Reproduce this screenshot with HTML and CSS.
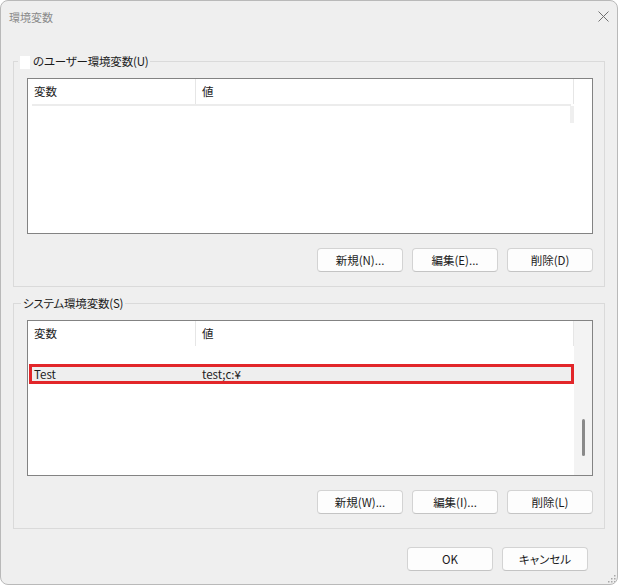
FILE: index.html
```html
<!DOCTYPE html>
<html lang="ja">
<head>
    <meta charset="UTF-8">
    <title>環境変数</title>
    <link rel="stylesheet" href="styles.css">
</head>
<body>
    <div class="window">
        <!-- タイトルバー -->
        <div class="titlebar">
            <span class="title">環境変数</span>
            <svg class="close" width="11" height="11" viewBox="0 0 11 11">
                <path d="M0.5 0.5 L10.5 10.5 M10.5 0.5 L0.5 10.5" stroke="#707070" stroke-width="1" fill="none"/>
            </svg>
        </div>

        <div class="content">
            <!-- ユーザー環境変数 -->
            <div class="group">
                <div class="group-title group-title-user">
                    <span class="check"></span>
                    <span>のユーザー環境変数(U)</span>
                </div>
                <div class="listview">
                    <div class="lv-header">
                        <div class="col col-name">変数</div>
                        <div class="col col-value">値</div>
                    </div>
                    <div class="lv-rule"></div>
                    <div class="lv-stub"></div>
                </div>
                <div class="buttons">
                    <button class="btn">新規(N)...</button>
                    <button class="btn">編集(E)...</button>
                    <button class="btn">削除(D)</button>
                </div>
            </div>

            <!-- システム環境変数 -->
            <div class="group group-system">
                <div class="group-title">
                    <span>システム環境変数(S)</span>
                </div>
                <div class="listview listview-scroll">
                    <div class="lv-main">
                        <div class="lv-header">
                            <div class="col col-name">変数</div>
                            <div class="col col-value">値</div>
                        </div>
                        <div class="lv-row selected">
                            <div class="row-name">Test</div>
                            <div class="row-value">test;c:¥</div>
                        </div>
                    </div>
                    <div class="scrollbar">
                        <div class="thumb"></div>
                    </div>
                </div>
                <div class="buttons">
                    <button class="btn">新規(W)...</button>
                    <button class="btn">編集(I)...</button>
                    <button class="btn">削除(L)</button>
                </div>
            </div>
        </div>

        <div class="footer">
            <button class="btn">OK</button>
            <button class="btn">キャンセル</button>
        </div>

        <svg class="grip" width="9" height="9" viewBox="0 0 9 9">
            <rect x="7" y="1" width="1.5" height="1.5" fill="#a8a8a8"/>
            <rect x="4" y="4" width="1.5" height="1.5" fill="#a8a8a8"/>
            <rect x="7" y="4" width="1.5" height="1.5" fill="#a8a8a8"/>
            <rect x="1" y="7" width="1.5" height="1.5" fill="#a8a8a8"/>
            <rect x="4" y="7" width="1.5" height="1.5" fill="#a8a8a8"/>
            <rect x="7" y="7" width="1.5" height="1.5" fill="#a8a8a8"/>
        </svg>
    </div>
</body>
</html>
```

FILE: styles.css
```css
/* 全体 */
body {
    margin: 0;
    font-family: "Noto Sans CJK JP", "Noto Sans", sans-serif;
    font-size: 11.5px;
    font-feature-settings: "palt";
    color: #1b1b1b;
    background: #ffffff;
}

.window {
    position: relative;
    width: 618px;
    height: 585px;
    box-sizing: border-box;
    border: 1px solid #b9b9b9;
    border-radius: 8px;
    background-color: #efefef;
    overflow: hidden;
}

/* タイトルバー */
.titlebar {
    height: 31px;
    display: flex;
    align-items: center;
    justify-content: space-between;
    padding: 0 8px;
}

.title {
    font-size: 11px;
    color: #8a8a8a;
}

.close {
    display: block;
}

.content {
    padding: 29px 12px 0;
}

/* グループボックス */
.group {
    border: 1px solid #dadada;
    padding: 0 11px 14px 13px;
}

.group-system {
    margin-top: 16px;
}

.group-title {
    display: flex;
    align-items: center;
    gap: 3px;
    width: fit-content;
    height: 16px;
    margin: -9px 0 0 -6px;
    padding: 0 2px;
    background-color: #efefef;
    line-height: 16px;
    letter-spacing: -0.2px;
}

.group-title-user {
    margin-left: -9px;
}

.check {
    width: 10px;
    height: 13px;
    margin-top: 3px;
    background-color: #ffffff;
}

/* リストビュー */
.listview {
    margin-top: 9px;
    height: 156px;
    box-sizing: border-box;
    border: 1px solid #838383;
    background-color: #ffffff;
}

.listview-scroll {
    display: flex;
}

.lv-main {
    width: 546px;
}

.lv-header {
    display: flex;
    height: 25px;
}

.col {
    box-sizing: border-box;
    padding-left: 6px;
    line-height: 25px;
    border-right: 1px solid #e6e6e6;
}

.col-name {
    width: 168px;
}

.col-value {
    width: 378px;
}

.lv-rule {
    height: 2px;
    margin: 0 21px 0 4px;
    background-color: #ececec;
}

.lv-stub {
    width: 4px;
    height: 17px;
    margin-left: 542px;
    background-color: #efefef;
}

.lv-row {
    display: flex;
    height: 20px;
    box-sizing: border-box;
    margin: 18px 0 0 1px;
    line-height: 14px;
}

.lv-row.selected {
    border: 3px solid #e2262a;
    background-color: #eeeeee;
}

.row-name {
    width: 170px;
    padding-left: 2px;
    box-sizing: border-box;
}

.scrollbar {
    width: 18px;
    background-color: #f3f3f3;
}

.thumb {
    width: 3px;
    height: 37px;
    margin: 98px 0 0 8px;
    border-radius: 2px;
    background-color: #8a8a8a;
}

/* ボタン */
.buttons {
    display: flex;
    justify-content: flex-end;
    gap: 9px;
    margin-top: 14px;
}

.btn {
    width: 86px;
    height: 24px;
    padding: 0;
    font-family: inherit;
    font-size: 11.5px;
    font-feature-settings: "palt";
    color: #1b1b1b;
    background-color: #fdfdfd;
    border: 1px solid #d3d3d3;
    border-bottom-color: #c4c4c4;
    border-radius: 4px;
}

.footer {
    display: flex;
    justify-content: flex-end;
    gap: 9px;
    margin-top: 18px;
    padding-right: 29px;
}

.grip {
    position: absolute;
    right: 1px;
    bottom: 1px;
}
```
